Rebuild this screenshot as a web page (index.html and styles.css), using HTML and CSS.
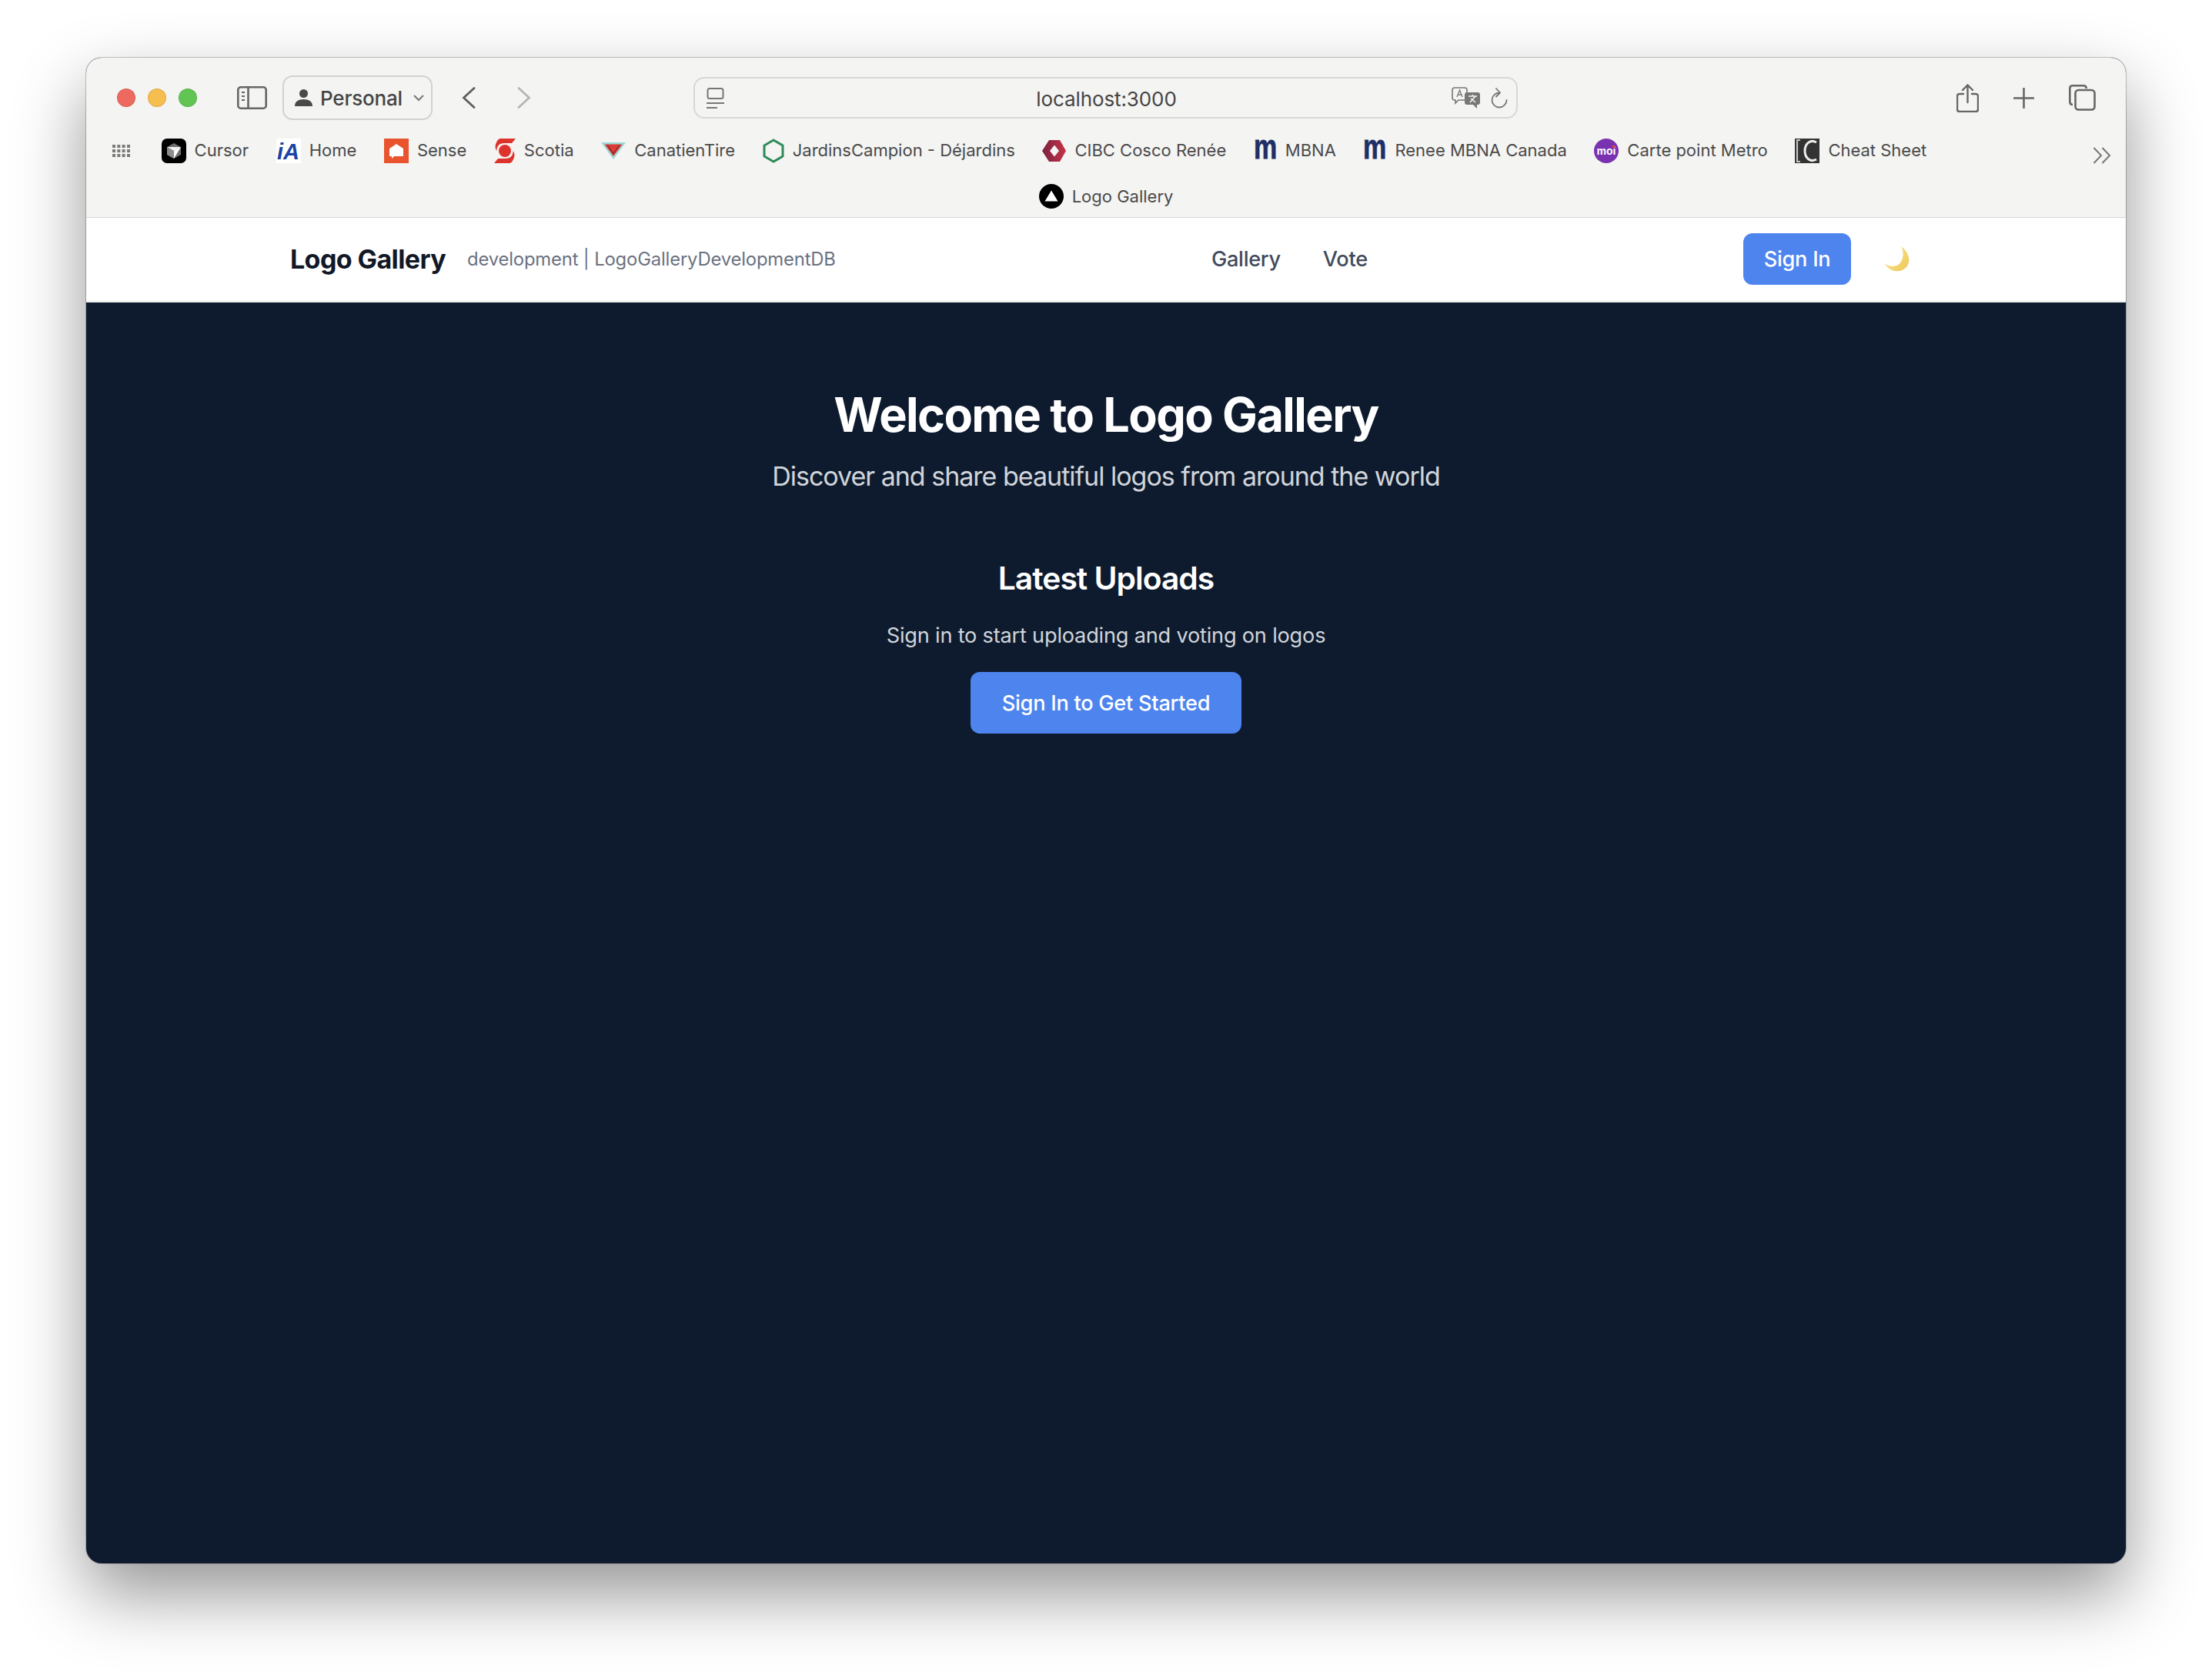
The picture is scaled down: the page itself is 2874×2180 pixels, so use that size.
FILE: index.html
```html
<!DOCTYPE html>
<html lang="en">
<head>
    <meta charset="UTF-8">
    <title>Logo Gallery</title>
    <link rel="stylesheet" href="styles.css">
</head>
<body>
    <div class="window">
        <header class="chrome">
            <div class="toolbar">
                <div class="lights">
                    <span class="light red"></span>
                    <span class="light yellow"></span>
                    <span class="light green"></span>
                </div>
                <svg class="tool sidebar-icon" width="39" height="30" viewBox="0 0 39 30" fill="none" stroke="#666" stroke-width="2.6">
                    <rect x="1.3" y="1.3" width="36.4" height="27.4" rx="3.5"/>
                    <path d="M14.5 1.3v27.4"/>
                    <path d="M6 8h4M6 13h4M6 18h4" stroke-width="2"/>
                </svg>
                <div class="profile">
                    <svg width="23" height="22" viewBox="0 0 23 22" fill="#4a4a4a">
                        <circle cx="11.5" cy="5.5" r="5.5"/>
                        <path d="M0 22c0-6 4.500-9 11.500-9s11.500 3 11.500 9z"/>
                    </svg>
                    <span class="profile-name">Personal</span>
                    <svg width="14" height="9" viewBox="0 0 14 9" fill="none" stroke="#777" stroke-width="2">
                        <path d="M1 1l6 6 6-6"/>
                    </svg>
                </div>
                <svg class="tool back" width="18" height="28" viewBox="0 0 18 28" fill="none" stroke="#5e5e5e" stroke-width="2.8" stroke-linecap="round">
                    <path d="M16 1.500L2.500 14 16 26.500"/>
                </svg>
                <svg class="tool forward" width="18" height="28" viewBox="0 0 18 28" fill="none" stroke="#b5b5b5" stroke-width="2.8" stroke-linecap="round">
                    <path d="M2 1.500L15.500 14 2 26.500"/>
                </svg>
                <div class="address">
                    <svg width="23" height="27" viewBox="0 0 23 27" fill="none" stroke="#777" stroke-width="2">
                        <rect x="1.500" y="1" width="20" height="13" rx="2.500"/>
                        <path d="M0 20h23M0 26h14"/>
                    </svg>
                    <span class="url">localhost:3000</span>
                    <svg width="38" height="28" viewBox="0 0 38 28" fill="none" stroke="#777" stroke-width="1.600">
                        <path d="M4 1h13c2 0 3 1 3 3v10c0 2-1 3-3 3H9l-4 4v-4H4c-2 0-3-1-3-3V4c0-2 1-3 3-3z"/>
                        <path d="M7 13l3.500-9L14 13M8 10h5" stroke-width="1.300"/>
                        <path d="M20 7h14c2 0 3 1 3 3v10c0 2-1 3-3 3h-1v5l-5-5h-8c-2 0-3-1-3-3V10c0-2 1-3 3-3z" fill="#777" stroke="none"/>
                        <path d="M22 12h11M27.500 10v2M24 20l7-8M25 15l6 5" stroke="#f4f4f2" stroke-width="1.500"/>
                    </svg>
                    <svg class="reload" width="22" height="27" viewBox="0 0 22 27" fill="none" stroke="#777" stroke-width="1.800" stroke-linecap="round" stroke-linejoin="round">
                        <path d="M11 6.500A9.500 9.500 0 1 0 20.500 16"/>
                        <path d="M7 1l5 5.500-5 5"/>
                    </svg>
                </div>
                <div class="actions">
                    <svg width="29" height="37" viewBox="0 0 29 37" fill="none" stroke="#666" stroke-width="2.400" stroke-linecap="round">
                        <path d="M9 13H4c-1.700 0-3 1.300-3 3v17c0 1.700 1.300 3 3 3h21c1.700 0 3-1.300 3-3V16c0-1.700-1.300-3-3-3h-5"/>
                        <path d="M14.500 24V2M8 8l6.500-6.500L21 8"/>
                    </svg>
                    <svg width="27" height="27" viewBox="0 0 27 27" fill="none" stroke="#666" stroke-width="2.600" stroke-linecap="round">
                        <path d="M13.500 1v25M1 13.500h25"/>
                    </svg>
                    <svg width="35" height="34" viewBox="0 0 35 34" fill="none" stroke="#666" stroke-width="2.600">
                        <path d="M5 26c-2.200 0-3.700-1.500-3.700-3.700V5c0-2.200 1.500-3.700 3.700-3.700h14c2.200 0 3.700 1.500 3.700 3.700"/>
                        <rect x="8.500" y="7" width="25" height="25.500" rx="4"/>
                    </svg>
                </div>
            </div>

            <div class="bookmarks">
                <svg class="grid-icon" width="23" height="16" viewBox="0 0 23 16" fill="#7a7a7a">
                    <path d="M0 0h4v4H0zM6.300 0h4v4h-4zM12.600 0h4v4h-4zM19 0h4v4h-4zM0 6h4v4H0zM6.300 6h4v4h-4zM12.600 6h4v4h-4zM19 6h4v4h-4zM0 12h4v4H0zM6.300 12h4v4h-4zM12.600 12h4v4h-4zM19 12h4v4h-4z"/>
                </svg>
                <a class="bookmark">
                    <svg width="32" height="32" viewBox="0 0 32 32">
                        <rect width="32" height="32" rx="7" fill="#000"/>
                        <path d="M16 6l9 5v10l-9 5-9-5V11z" fill="#6e6e6e"/>
                        <path d="M7 11l18 0-9 5z" fill="#f2f2f2"/>
                        <path d="M25 11l-9 15v-10z" fill="#fff"/>
                        <path d="M7 11l9 5v10l-9-5z" fill="#8d8d8d"/>
                    </svg>
                    <span>Cursor</span>
                </a>
                <a class="bookmark">
                    <svg width="32" height="32" viewBox="0 0 32 32">
                        <rect width="32" height="32" fill="#fff"/>
                        <text class="ia-mark" x="1" y="27">iA</text>
                    </svg>
                    <span>Home</span>
                </a>
                <a class="bookmark">
                    <svg width="32" height="32" viewBox="0 0 32 32">
                        <rect width="32" height="32" fill="#e9542e"/>
                        <path d="M16 7l9 6v10H13l-3 3v-3H7V13z" fill="#fff"/>
                    </svg>
                    <span>Sense</span>
                </a>
                <a class="bookmark">
                    <svg width="28" height="32" viewBox="0 0 28 32" fill="#de322d">
                        <circle cx="14" cy="16" r="8"/>
                        <path d="M8 0h20l-5 6H13C7 6 3 10 3.500 16 1 13 1 9 3 5c1-2.500 3-5 5-5z"/>
                        <path d="M20 32H0l5-6h10c6 0 10-4 9.500-10 2.500 3 2.500 7 .5 11-1 2.500-3 5-5 5z"/>
                    </svg>
                    <span>Scotia</span>
                </a>
                <a class="bookmark">
                    <svg width="32" height="32" viewBox="0 0 32 32">
                        <path d="M0 5h32L16 27z" fill="#9dd8d8"/>
                        <path d="M4.500 7.500h23L16 23z" fill="#dc3a36"/>
                        <path d="M8 8.500l8 11 8-11" fill="none" stroke="#7a2a30" stroke-width="1.200"/>
                    </svg>
                    <span>CanatienTire</span>
                </a>
                <a class="bookmark">
                    <svg width="28" height="32" viewBox="2 0 28 32">
                        <path d="M16 2l12 7v14l-12 7-12-7V9z" fill="none" stroke="#2f8a57" stroke-width="3"/>
                    </svg>
                    <span>JardinsCampion - Déjardins</span>
                </a>
                <a class="bookmark">
                    <svg width="31" height="32" viewBox="0 0 31 32">
                        <defs>
                            <linearGradient id="cibc" x1="0" x2="1" y1="0" y2="0">
                                <stop offset="0" stop-color="#7a2340"/>
                                <stop offset="1" stop-color="#c63248"/>
                            </linearGradient>
                        </defs>
                        <path d="M9 2h14l8 14-8 14H9L0 16z" fill="url(#cibc)"/>
                        <path d="M16 8.500L22 16l-6 7.500L10 16z" fill="#f4f4f2"/>
                    </svg>
                    <span>CIBC Cosco Renée</span>
                </a>
                <a class="bookmark">
                    <svg class="m-icon" width="30" height="32" viewBox="1 0 30 32">
                        <text class="m-mark" transform="translate(16 26) scale(1 1.28)">m</text>
                    </svg>
                    <span>MBNA</span>
                </a>
                <a class="bookmark">
                    <svg class="m-icon" width="30" height="32" viewBox="1 0 30 32">
                        <text class="m-mark" transform="translate(16 26) scale(1 1.28)">m</text>
                    </svg>
                    <span>Renee MBNA Canada</span>
                </a>
                <a class="bookmark">
                    <svg width="32" height="32" viewBox="0 0 32 32">
                        <circle cx="16" cy="16" r="16" fill="#7a33b0"/>
                        <text class="moi-mark" x="16" y="21">moi</text>
                        <circle cx="25.500" cy="10.500" r="1.700" fill="#e8452f"/>
                    </svg>
                    <span>Carte point Metro</span>
                </a>
                <a class="bookmark">
                    <svg width="32" height="32" viewBox="0 0 32 32">
                        <rect width="32" height="32" fill="#333"/>
                        <path d="M7 2H3v28h4" fill="none" stroke="#fff" stroke-width="2.200" opacity=".7"/>
                        <path d="M28 5c-9-5-15 3-15 11s6 16 15 11" fill="none" stroke="#eee" stroke-width="3"/>
                    </svg>
                    <span>Cheat Sheet</span>
                </a>
                <svg class="overflow-icon" width="24" height="22" viewBox="0 0 24 22" fill="none" stroke="#777" stroke-width="2">
                    <path d="M1.500 1L11 11 1.500 21M12.500 1L22 11l-9.500 10"/>
                </svg>
            </div>
            <div class="bookmarks-extra">
                <a class="bookmark">
                    <svg width="32" height="32" viewBox="0 0 32 32">
                        <circle cx="16" cy="16" r="16" fill="#000"/>
                        <path d="M16 8.500l8.500 14h-17z" fill="#fff"/>
                    </svg>
                    <span>Logo Gallery</span>
                </a>
            </div>
        </header>

        <nav class="navbar">
            <div class="brand">
                <span class="brand-name">Logo Gallery</span>
                <span class="brand-env">development | LogoGalleryDevelopmentDB</span>
            </div>
            <div class="nav-links">
                <a>Gallery</a>
                <a>Vote</a>
            </div>
            <div class="nav-right">
                <button class="btn btn-small">Sign In</button>
                <svg class="moon" width="33" height="33" viewBox="0 0 33 33">
                    <defs>
                        <linearGradient id="moonFill" x1="0" x2="1" y1="0" y2="1">
                            <stop offset="0" stop-color="#f7e48f"/>
                            <stop offset="1" stop-color="#f0c95a"/>
                        </linearGradient>
                    </defs>
                    <path d="M21 0c9 6 14 19 7 27-7 8-21 7-28-4 9 5 18 4 22-5 2.500-6 2-13-1-18z" fill="url(#moonFill)"/>
                </svg>
            </div>
        </nav>

        <main class="hero">
            <h1>Welcome to Logo Gallery</h1>
            <p class="lead">Discover and share beautiful logos from around the world</p>
            <h2>Latest Uploads</h2>
            <p class="prompt">Sign in to start uploading and voting on logos</p>
            <button class="btn btn-large">Sign In to Get Started</button>
        </main>
    </div>
</body>
</html>
```

FILE: styles.css
```css
* { box-sizing: border-box; }

svg { flex: none; }

body {
    margin: 0;
    height: 2180px;
    padding: 75px 112px 0;
    background: #fff;
    font-family: Inter, "Noto Sans", sans-serif;
    overflow: hidden;
}

.window {
    height: 1956px;
    display: flex;
    flex-direction: column;
    border-radius: 20px;
    overflow: hidden;
    background: #0e1b2e;
    box-shadow: 0 0 0 1px rgba(0,0,0,0.22), 0 40px 90px rgba(0,0,0,0.42);
}

/* Browser chrome */
.chrome {
    height: 208px;
    flex: none;
    background: #f4f4f2;
    border-bottom: 1px solid #d6d6d4;
}

.toolbar {
    height: 80px;
    padding-top: 24px;
    display: flex;
    align-items: center;
}

.lights { display: flex; gap: 16px; margin-left: 40px; }
.light { width: 24px; height: 24px; border-radius: 50%; border: 1px solid rgba(0,0,0,0.1); }
.red { background: #ee6a5f; }
.yellow { background: #f6be4f; }
.green { background: #61c554; }

.sidebar-icon { margin-left: 52px; }

.profile {
    width: 195px;
    height: 58px;
    margin-left: 20px;
    padding-left: 14px;
    display: flex;
    align-items: center;
    border: 2px solid #d2d2d0;
    border-radius: 13px;
}

.profile-name {
    margin: 0 14px 0 10px;
    color: #444;
    font-size: 26px;
    font-weight: 500;
    letter-spacing: -0.2px;
}

.back { margin-left: 38px; }
.forward { margin-left: 54px; }

.address {
    width: 1071px;
    height: 54px;
    margin-left: 211px;
    padding: 0 11px 0 15px;
    display: flex;
    align-items: center;
    border: 2px solid #d8d8d6;
    border-radius: 14px;
}

.url {
    flex: 1;
    text-align: center;
    color: #444;
    font-size: 26px;
    padding-left: 48px;
    padding-top: 2px;
    letter-spacing: -0.1px;
}

.reload { margin-left: 13px; }

.actions {
    margin-left: 570px;
    display: flex;
    align-items: center;
    gap: 45px;
}

.bookmarks {
    height: 32px;
    margin-top: 25px;
    padding-left: 34px;
    display: flex;
    align-items: center;
    gap: 35.600px;
    white-space: nowrap;
}

.bookmarks .bookmark span { margin-top: -2px; }

.grid-icon { margin-right: 5px; }
.overflow-icon { margin-left: 180px; margin-top: 12px; }

.bookmark {
    display: flex;
    align-items: center;
    gap: 11px;
    color: #4a4a4a;
    font-size: 22px;
}

.bookmarks-extra {
    margin-top: 27px;
    display: flex;
    justify-content: center;
}

.m-icon { overflow: visible; }

.ia-mark { font: italic bold 29px "Liberation Sans", sans-serif; fill: #1b42a5; }
.m-mark { font: bold 34px "Liberation Sans", sans-serif; fill: #1e2f66; stroke: #1e2f66; stroke-width: 0.6px; text-anchor: middle; }
.moi-mark { font: bold 14px "Liberation Sans", sans-serif; fill: #fff; text-anchor: middle; }

/* App navbar */
.navbar {
    height: 110px;
    flex: none;
    padding: 0 280px 2px 265px;
    display: flex;
    justify-content: space-between;
    align-items: center;
    background: #fff;
    border-bottom: 2px solid #eceef0;
}

.brand { display: flex; align-items: center; gap: 28px; }
.brand-name { color: #111827; font-size: 34px; font-weight: 700; letter-spacing: -0.6px; }
.brand-env { color: #6b7280; font-size: 23.800px; letter-spacing: -0.15px; }

.nav-links { display: flex; gap: 55px; color: #414b5c; font-size: 27.200px; font-weight: 500; letter-spacing: -0.3px; }

.nav-right { display: flex; align-items: center; gap: 44px; }

.btn {
    border: none;
    border-radius: 12px;
    background: #4d84ee;
    color: #fff;
    font-family: inherit;
    font-size: 27.200px;
    font-weight: 500;
    letter-spacing: -0.27px;
}

.btn-small { width: 140px; height: 67px; }
.btn-large { width: 352px; height: 80px; }

/* Hero */
.hero {
    flex: 1;
    padding-top: 112px;
    display: flex;
    flex-direction: column;
    align-items: center;
    color: #fff;
}

h1 { margin: 0; font-size: 61.200px; line-height: 68px; font-weight: 700; letter-spacing: -1.6px; }
.lead { margin: 22px 0 0; font-size: 34px; line-height: 48px; color: #d1d5db; letter-spacing: -1px; }
h2 { margin: 80px 0 0; font-size: 40.800px; line-height: 56px; font-weight: 600; letter-spacing: -1px; }
.prompt { margin: 26px 0 0; font-size: 27.200px; line-height: 42px; color: #d1d5db; letter-spacing: -0.22px; }
.btn-large { margin-top: 26px; }
```
